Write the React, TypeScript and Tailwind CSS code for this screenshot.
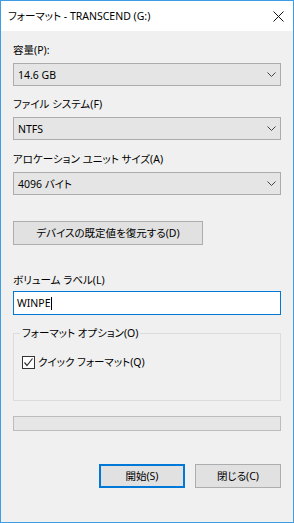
import React from 'react';

const font = "font-['Noto_Sans','Noto_Sans_CJK_JP',sans-serif] [font-feature-settings:'palt']";

const Chevron = () => (
  <svg width="9" height="5" viewBox="0 0 9 5" className="shrink-0">
    <path d="M0.5 0.5 L4.5 4.5 L8.5 0.5" fill="none" stroke="#444" strokeWidth="1" />
  </svg>
);

const Select = ({ value }: { value: string }) => (
  <div className="flex items-center justify-between h-[23px] border border-[#acacac] bg-[#e5e5e5] pl-[4px] pr-[4px]">
    <span>{value}</span>
    <Chevron />
  </div>
);

export default function App() {
  return (
    <div
      className={`${font} text-[10.5px] leading-[16px] text-black w-[294px] h-[523px] border border-[#3f9de6] bg-[#f0f0f0] flex flex-col`}
    >
      {/* Title bar */}
      <div className="h-[30px] bg-white flex items-center justify-between pl-[7px] pr-[9px]">
        <span>フォーマット - TRANSCEND (G:)</span>
        <svg width="11" height="11" viewBox="0 0 11 11">
          <path d="M0.5 0.5 L10.5 10.5 M10.5 0.5 L0.5 10.5" stroke="#111" strokeWidth="1" />
        </svg>
      </div>

      <div className="flex flex-col px-[12px]">
        <div className="mt-[11px] h-[16px]">容量(P):</div>
        <div className="mt-[5px]">
          <Select value="14.6 GB" />
        </div>

        <div className="mt-[10px] h-[16px]">ファイル システム(F)</div>
        <div className="mt-[5px]">
          <Select value="NTFS" />
        </div>

        <div className="mt-[11px] h-[16px]">アロケーション ユニット サイズ(A)</div>
        <div className="mt-[5px]">
          <Select value="4096 バイト" />
        </div>

        <button className="mt-[26px] w-[190px] h-[24px] border border-[#adadad] bg-[#e1e1e1] flex items-center justify-center">
          デバイスの既定値を復元する(D)
        </button>

        <div className="mt-[27px] h-[16px]">ボリューム ラベル(L)</div>
        <div className="mt-[3px] h-[24px] border border-[#0078d7] bg-white flex items-center pl-[3px]">
          <span>WINPE</span>
          <span className="w-px h-[13px] bg-black" />
        </div>

        <fieldset className="mt-[10px] h-[76px] border border-[#dcdcdc]">
          <legend className="ml-[6px] px-[2px] h-[16px]">フォーマット オプション(O)</legend>
          <div className="mt-[13px] pl-[8px] flex items-center gap-[3px]">
            <span className="w-[13px] h-[13px] border border-[#333] bg-white flex items-center justify-center">
              <svg width="11" height="11" viewBox="0 0 11 11">
                <path d="M1.5 5.5 L4 8.5 L9.5 1.5" fill="none" stroke="#333" strokeWidth="1.2" />
              </svg>
            </span>
            <span>クイック フォーマット(Q)</span>
          </div>
        </fieldset>

        <div className="mt-[15px] h-[15px] border border-[#bcbcbc] bg-[#e6e6e6]" />

        <div className="mt-[33px] flex justify-end gap-[10px]">
          <button className="w-[86px] h-[24px] border-2 border-[#0078d7] bg-[#e1e1e1] flex items-center justify-center">
            開始(S)
          </button>
          <button className="w-[86px] h-[24px] border border-[#adadad] bg-[#e1e1e1] flex items-center justify-center">
            閉じる(C)
          </button>
        </div>
      </div>
    </div>
  );
}
